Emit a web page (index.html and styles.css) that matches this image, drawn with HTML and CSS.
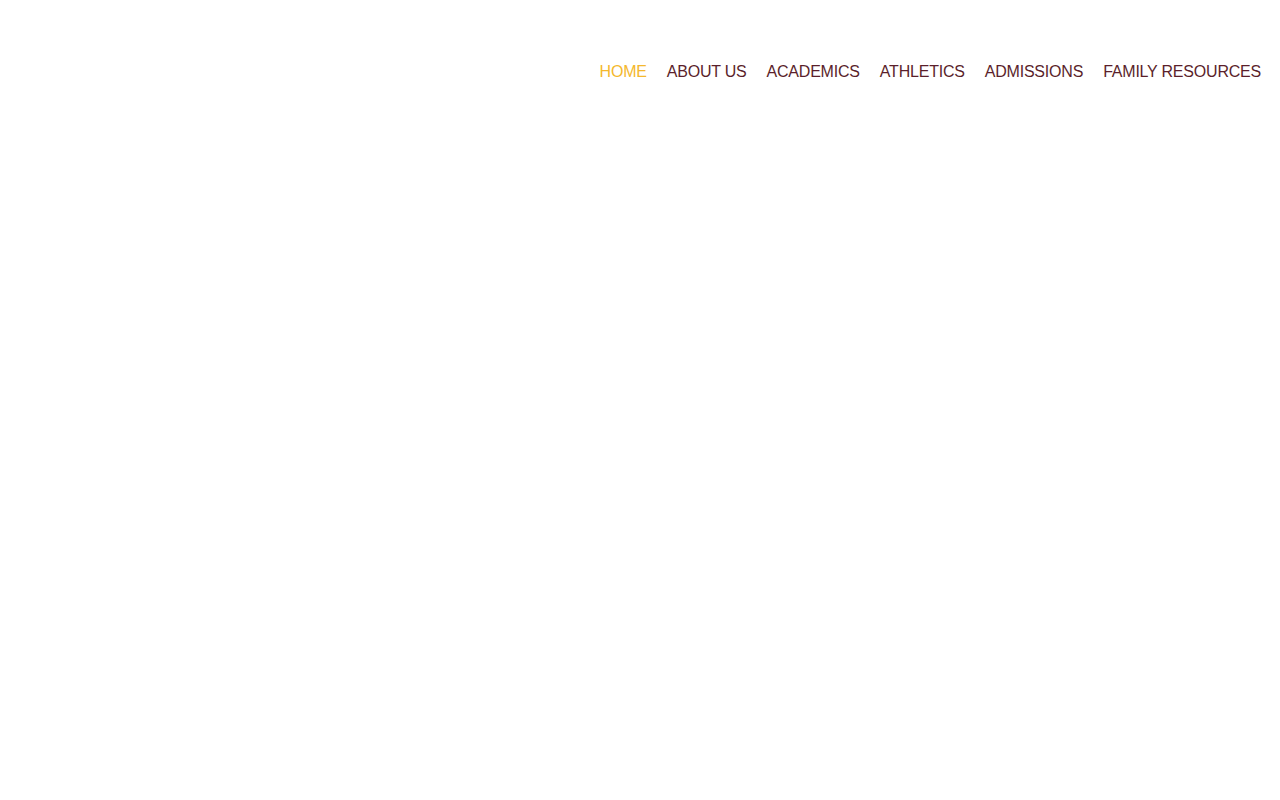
FILE: index.html
```html
<!DOCTYPE html>
<html lang="en">
<head>
    <meta charset="UTF-8">
    <meta name="viewport" content="width=device-width, initial-scale=1.0">
    <title>Home</title>
    <link rel="stylesheet" href="styles.css">
</head>
<body>
    <header class="site-header">
        <nav class="main-nav">
            <a href="#" class="active">HOME</a>
            <a href="#">ABOUT US</a>
            <a href="#">ACADEMICS</a>
            <a href="#">ATHLETICS</a>
            <a href="#">ADMISSIONS</a>
            <a href="#">FAMILY RESOURCES</a>
        </nav>
    </header>
    <main class="content"></main>
</body>
</html>
```

FILE: styles.css
```css
body {
    margin: 0;
    padding: 0;
    background-color: #fff;
    font-family: "Liberation Sans", Arial, sans-serif;
}

.site-header {
    display: flex;
    justify-content: flex-end;
    padding: 60px 19px 0 0;
}

.main-nav {
    display: flex;
    gap: 20px;
}

.main-nav a {
    color: #5b1f2b;
    text-decoration: none;
    font-size: 16px;
    letter-spacing: -0.21px;
    line-height: 24px;
}

.main-nav a.active {
    color: #f4b82e;
}

.content {
    min-height: 700px;
}
```
